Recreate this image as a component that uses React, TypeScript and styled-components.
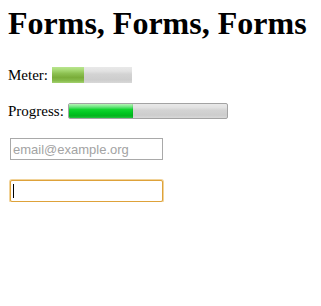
import React from 'react'
import styled, { createGlobalStyle } from 'styled-components'

const GlobalStyle = createGlobalStyle`
  html, body {
    margin: 0;
    background: #fff;
  }
  body {
    font-family: "Liberation Serif", "Times New Roman", serif;
    color: #000;
  }
`

const Page = styled.div`
  display: flex;
  flex-direction: column;
  align-items: flex-start;
  padding: 0 8px;
`

const Title = styled.h1`
  margin: 0;
  padding-top: 5px;
  font: 700 32px/37px "Liberation Serif", "Times New Roman", serif;
  white-space: nowrap;
`

const Row = styled.div<{ $gap: number }>`
  display: flex;
  align-items: center;
  height: 16px;
  margin-top: ${p => p.$gap}px;
`

const Label = styled.span`
  font-size: 15px;
  line-height: 16px;
  white-space: pre;
`

const Track = styled.div<{ $width: number; $framed?: boolean }>`
  position: relative;
  box-sizing: border-box;
  width: ${p => p.$width}px;
  height: 16px;
  overflow: hidden;
  background: linear-gradient(
    to bottom,
    #e9e9e9 0%,
    #e2e2e2 25%,
    #d3d3d3 45%,
    #cdcdcd 80%,
    #d8d8d8 100%
  );
  ${p =>
    p.$framed &&
    `
    border: 1px solid #a3a3a3;
    border-radius: 2px;
  `}
`

const MeterFill = styled.div`
  height: 100%;
  background: linear-gradient(
    to bottom,
    #b9e58e 0%,
    #a6d873 20%,
    #8dc152 40%,
    #7aad3a 65%,
    #86bb4a 85%,
    #a3d16f 100%
  );
`

const ProgressFill = styled.div`
  height: 100%;
  background: linear-gradient(
    to bottom,
    #b6f5b6 0%,
    #6fe682 20%,
    #10d52e 40%,
    #00c620 65%,
    #02b51d 85%,
    #26c43f 100%
  );
  box-shadow: inset -1px 0 0 rgba(0, 0, 0, 0.06);
`

const Field = styled.div<{ $gap: number; $focused?: boolean }>`
  position: relative;
  box-sizing: border-box;
  display: flex;
  align-items: center;
  width: 153px;
  height: 22px;
  margin: ${p => p.$gap}px 0 0 2px;
  padding: 0 2px;
  border: 1px solid ${p => (p.$focused ? '#dea23a' : '#a9a9a9')};
  border-radius: ${p => (p.$focused ? '2px' : '0')};
  box-shadow: ${p =>
    p.$focused ? '0 0 0 1px rgba(236, 196, 120, 0.75)' : 'none'};
  background: #fff;
  font: 13px "Liberation Sans", Arial, sans-serif;
`

const Placeholder = styled.span`
  color: #a3a3a3;
  white-space: nowrap;
  padding-top: 1px;
`

const Caret = styled.span`
  width: 1px;
  height: 14px;
  background: #000;
  margin-left: 0px;
`

const meter = 0.4
const progress = 0.41

export default function App() {
  return (
    <>
      <GlobalStyle />
      <Page>
        <Title>Forms, Forms, Forms</Title>
        <Row $gap={25}>
          <Label>Meter: </Label>
          <Track $width={80}>
            <MeterFill style={{ width: `${meter * 100}%` }} />
          </Track>
        </Row>
        <Row $gap={20}>
          <Label>Progress: </Label>
          <Track $width={160} $framed>
            <ProgressFill style={{ width: `${progress * 100}%` }} />
          </Track>
        </Row>
        <Field $gap={19}>
          <Placeholder>email@example.org</Placeholder>
        </Field>
        <Field $gap={20} $focused>
          <Caret />
        </Field>
      </Page>
    </>
  )
}
